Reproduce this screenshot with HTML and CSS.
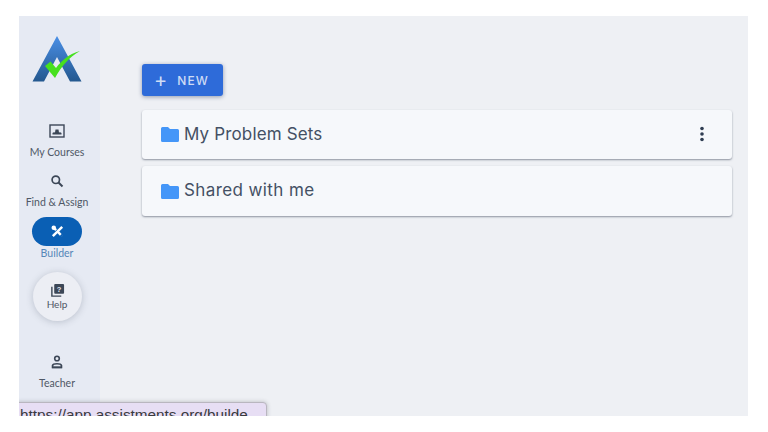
FILE: index.html
```html
<!DOCTYPE html>
<html lang="en">
<head>
<meta charset="utf-8">
<title>Builder</title>
<link rel="stylesheet" href="styles.css">
</head>
<body>
<div class="frame">
  <aside class="sidebar">
    <svg class="logo" viewBox="0 0 50 46" width="50" height="46">
      <defs>
        <linearGradient id="lg" x1="0" y1="0" x2="0" y2="1">
          <stop offset="0" stop-color="#4a8fe6"/>
          <stop offset="1" stop-color="#24588f"/>
        </linearGradient>
      </defs>
      <path d="M25 0 L49.500 45.500 L38 45.500 L25 21 L12 45.500 L0.500 45.500 Z" fill="url(#lg)"/>
      <path d="M13 30 L23 42 C29 31 37 21 48 15 C37 18 30 24 24 32 L18.500 25.500 Z" fill="#46e01e"/>
    </svg>
    <div class="nav-item courses">
      <svg class="icon" viewBox="0 0 16 16" width="16" height="16"><rect x="1" y="2" width="14" height="12" fill="none" stroke="#3c4757" stroke-width="1.400"/><path d="M3.500 11.500 V10 Q4.500 9 6 9.500 L6.500 6.500 H9.500 L10 9.500 Q11.500 9 12.500 10 V11.500 Z" fill="#3c4757"/></svg>
      <span>My Courses</span>
    </div>
    <div class="nav-item find">
      <svg class="icon" viewBox="0 0 16 16" width="16" height="16"><circle cx="6.800" cy="6.800" r="3.700" fill="none" stroke="#3c4757" stroke-width="1.700"/><path d="M9.500 9.500 L13.500 13.500" stroke="#3c4757" stroke-width="2"/></svg>
      <span>Find &amp; Assign</span>
    </div>
    <div class="nav-item builder">
      <div class="pill">
        <svg viewBox="0 0 16 16" width="15" height="15"><path d="M3 13 L13 3" stroke="#fff" stroke-width="2.600"/><path d="M3 3 L13 13" stroke="#fff" stroke-width="2.600" stroke-dasharray="5 2"/><circle cx="4" cy="4" r="2.400" fill="#fff"/></svg>
      </div>
      <span>Builder</span>
    </div>
    <div class="help">
      <svg viewBox="0 0 16 16" width="15" height="15"><path d="M2 4 V14 H12" fill="none" stroke="#3c4757" stroke-width="1.500"/><rect x="4.500" y="1" width="10.500" height="10.500" rx="1" fill="#3c4757"/><text x="9.750" y="9.500" class="q">?</text></svg>
      <span>Help</span>
    </div>
    <div class="nav-item teacher">
      <svg class="icon" viewBox="0 0 16 16" width="16" height="16"><circle cx="8" cy="4.500" r="2.300" fill="none" stroke="#3c4757" stroke-width="1.600"/><path d="M3.500 13.500 V11.500 Q4 9.800 8 9.800 Q12 9.800 12.500 11.500 V13.500 Z" fill="none" stroke="#3c4757" stroke-width="1.600"/><path d="M3 13.300 H13" stroke="#3c4757" stroke-width="1.800"/></svg>
      <span>Teacher</span>
    </div>
  </aside>
  <main class="content">
    <button class="new-btn"><span class="plus">+</span><span>NEW</span></button>
    <section class="card">
      <svg class="folder" viewBox="0 0 18 15" width="18" height="15"><path d="M1.500 0 H7 L9 2 H16.500 Q18 2 18 3.500 V13.500 Q18 15 16.500 15 H1.500 Q0 15 0 13.500 V1.500 Q0 0 1.500 0 Z" fill="#4496f8"/></svg>
      <span class="card-title">My Problem Sets</span>
      <svg class="more" viewBox="0 0 4 16" width="4" height="16"><circle cx="2" cy="2.500" r="1.800"/><circle cx="2" cy="8" r="1.800"/><circle cx="2" cy="13.500" r="1.800"/></svg>
    </section>
    <section class="card second">
      <svg class="folder" viewBox="0 0 18 15" width="18" height="15"><path d="M1.500 0 H7 L9 2 H16.500 Q18 2 18 3.500 V13.500 Q18 15 16.500 15 H1.500 Q0 15 0 13.500 V1.500 Q0 0 1.500 0 Z" fill="#4496f8"/></svg>
      <span class="card-title">Shared with me</span>
    </section>
  </main>
  <div class="url-tip">https://app.assistments.org/builde</div>
</div>
</body>
</html>
```
FILE: styles.css
```css
html, body { margin: 0; height: 100%; background: #fff; }
body { padding: 16px 20px 16px 19px; box-sizing: border-box; font-family: "Lato", sans-serif; overflow: hidden; }
.frame { position: relative; display: flex; height: 400px; overflow: hidden; background: #eef0f4; }
.sidebar { width: 81px; padding-right: 5px; box-sizing: border-box; flex: none; background: #e6eaf3; display: flex; flex-direction: column; align-items: center; color: #4f5866; }
.logo { margin: 20px 0 0 0; display: block; }
.nav-item { display: flex; flex-direction: column; align-items: center; font-size: 10.500px; line-height: 14px; white-space: nowrap; }
.nav-item .icon { display: block; }
.courses { margin-top: 41px; gap: 6px; }
.find { margin-top: 14px; gap: 6px; }
.builder { margin-top: 8px; gap: 0; color: #5587b8; }
.pill { width: 50px; height: 29px; border-radius: 15px; background: #0a5fb4; display: flex; align-items: center; justify-content: center; }
.help { margin-top: 12px; width: 49px; height: 49px; border-radius: 50%; background: #eceef4; box-shadow: 0 1px 7px rgba(60,70,90,.25); display: flex; flex-direction: column; align-items: center; justify-content: center; font-size: 10px; line-height: 12px; gap: 0; padding-bottom: 1px; box-sizing: border-box; color: #4f5866; }
.q { font: bold 8px "Liberation Sans", sans-serif; fill: #eceef4; text-anchor: middle; }
.teacher { margin-top: 33px; gap: 6px; }
.content { flex: 1; padding: 48px 16px 0 42px; display: flex; flex-direction: column; align-items: stretch; }
.new-btn { align-self: flex-start; width: 81px; height: 32px; border: 0; border-radius: 3px; background: #2e6bd9; color: #cfdcf5; box-shadow: 0 1px 4px rgba(30,50,90,.45); display: flex; align-items: center; justify-content: center; gap: 10px; font: 500 12px "Inter", sans-serif; letter-spacing: 1.200px; padding: 0 0 0 1px; }
.plus { font-size: 20px; font-weight: 400; line-height: 1; letter-spacing: 0; margin-left: -3px; }
.card { height: 49px; margin-top: 14px; background: #f6f8fb; border-radius: 3px; box-shadow: 0 1px 2px rgba(60,70,90,.55); display: flex; align-items: center; padding: 0 28px 0 19px; box-sizing: border-box; }
.card.second { margin-top: 7px; height: 50px; }
.folder { flex: none; margin-right: 5px; }
.card-title { flex: 1; font: 400 17px/20px "Inter", sans-serif; letter-spacing: .15px; color: #445064; margin-top: -2px; }
.second .card-title { letter-spacing: .4px; }
.more { fill: #2f3d52; flex: none; margin-top: -2px; }
.url-tip { position: absolute; left: -4px; top: 386px; width: 252px; height: 30px; box-sizing: border-box; padding: 2px 0 0 4px; background: #e7def4; border: 1px solid #b9b6bf; border-radius: 4px; box-shadow: 0 0 4px rgba(60,60,70,.3); font: 15.300px/20px "Liberation Sans", sans-serif; color: #3a3a3f; white-space: nowrap; overflow: hidden; }
```
